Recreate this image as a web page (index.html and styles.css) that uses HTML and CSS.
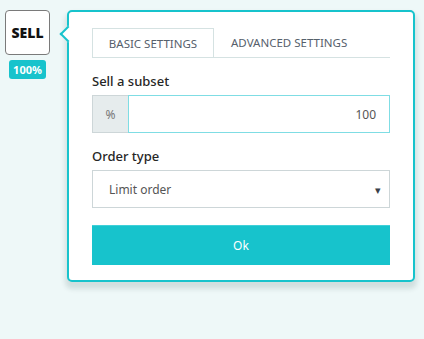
FILE: index.html
```html
<!DOCTYPE html>
<html lang="en">
<head>
    <meta charset="UTF-8">
    <meta name="viewport" content="width=device-width, initial-scale=1.0">
    <title>Sell settings</title>
    <link rel="stylesheet" href="styles.css">
</head>
<body>
    <div class="page">
        <div class="action">
            <div class="sellBox">SELL</div>
            <div class="badge">100%</div>
        </div>
        <div class="popup">
            <div class="arrow"></div>
            <div class="tabs">
                <div class="tab active">BASIC SETTINGS</div>
                <div class="tab">ADVANCED SETTINGS</div>
            </div>
            <div class="label">Sell a subset</div>
            <div class="inputGroup">
                <div class="addon">%</div>
                <div class="field">100</div>
            </div>
            <div class="label">Order type</div>
            <div class="select">
                <span>Limit order</span>
                <span class="caret">&#9662;</span>
            </div>
            <button class="okButton">Ok</button>
        </div>
    </div>
</body>
</html>
```

FILE: styles.css
```css
body {
    margin: 0;
    background-color: #eef8f8;
    font-family: "Noto Sans", "Open Sans", sans-serif;
}
.page {
    display: flex;
    align-items: flex-start;
    padding: 10px 0 0 5px;
    height: 329px;
}
.action {
    width: 45px;
    display: flex;
    flex-direction: column;
    align-items: center;
}
.sellBox {
    width: 43px;
    height: 43px;
    border: 1px solid #7a7a7a;
    border-radius: 4px;
    background-color: white;
    display: flex;
    justify-content: center;
    align-items: center;
    font-size: 14px;
    font-weight: 900;
    color: #111;
}
.badge {
    margin-top: 5px;
    width: 37px;
    height: 19px;
    border-radius: 3px;
    background-color: #17c3cc;
    color: white;
    font-size: 11px;
    font-weight: 700;
    display: flex;
    justify-content: center;
    align-items: center;
}
.popup {
    position: relative;
    margin-left: 17px;
    width: 298px;
    padding: 16px 23px 15px 23px;
    border: 2px solid #17c3cc;
    border-radius: 5px;
    background-color: white;
    box-shadow: 0 5px 5px 2px rgba(0, 50, 50, 0.12);
}
.arrow {
    position: absolute;
    left: -7px;
    top: 16px;
    width: 10px;
    height: 10px;
    background-color: white;
    border-left: 2px solid #17c3cc;
    border-bottom: 2px solid #17c3cc;
    transform: rotate(45deg);
}
.tabs {
    display: flex;
    height: 29px;
    border-bottom: 1px solid #d5e2e2;
}
.tab {
    height: 29px;
    display: flex;
    align-items: center;
    padding: 0 17px;
    font-size: 11.5px;
    color: #56606c;
    white-space: nowrap;
    box-sizing: border-box;
}
.tab.active {
    width: 122px;
    padding: 0;
    justify-content: center;
    border: 1px solid #d5e2e2;
    border-bottom: none;
}
.label {
    margin-top: 13px;
    margin-bottom: 4px;
    line-height: 20px;
    font-size: 13px;
    font-weight: 500;
    color: #262626;
}
.inputGroup {
    display: flex;
    height: 38px;
}
.addon {
    width: 35px;
    border: 1px solid #cdd6d8;
    border-right: none;
    background-color: #e6eced;
    color: #777;
    font-size: 12px;
    display: flex;
    justify-content: center;
    align-items: center;
}
.field {
    flex: 1;
    border: 1px solid #7fdde4;
    display: flex;
    justify-content: flex-end;
    align-items: center;
    padding-right: 13px;
    font-size: 12px;
    color: #555;
}
.select {
    height: 36px;
    border: 1px solid #cdd6d8;
    display: flex;
    justify-content: space-between;
    align-items: center;
    padding: 0 8px 0 16px;
    font-size: 12px;
    color: #555;
}
.caret {
    font-size: 11px;
    color: #3a4048;
}
.okButton {
    display: block;
    margin-top: 17px;
    width: 100%;
    height: 40px;
    border: none;
    border-top: 1px solid #3fd0d8;
    background-color: #17c3cc;
    color: white;
    font-family: inherit;
    font-size: 12px;
}
```
